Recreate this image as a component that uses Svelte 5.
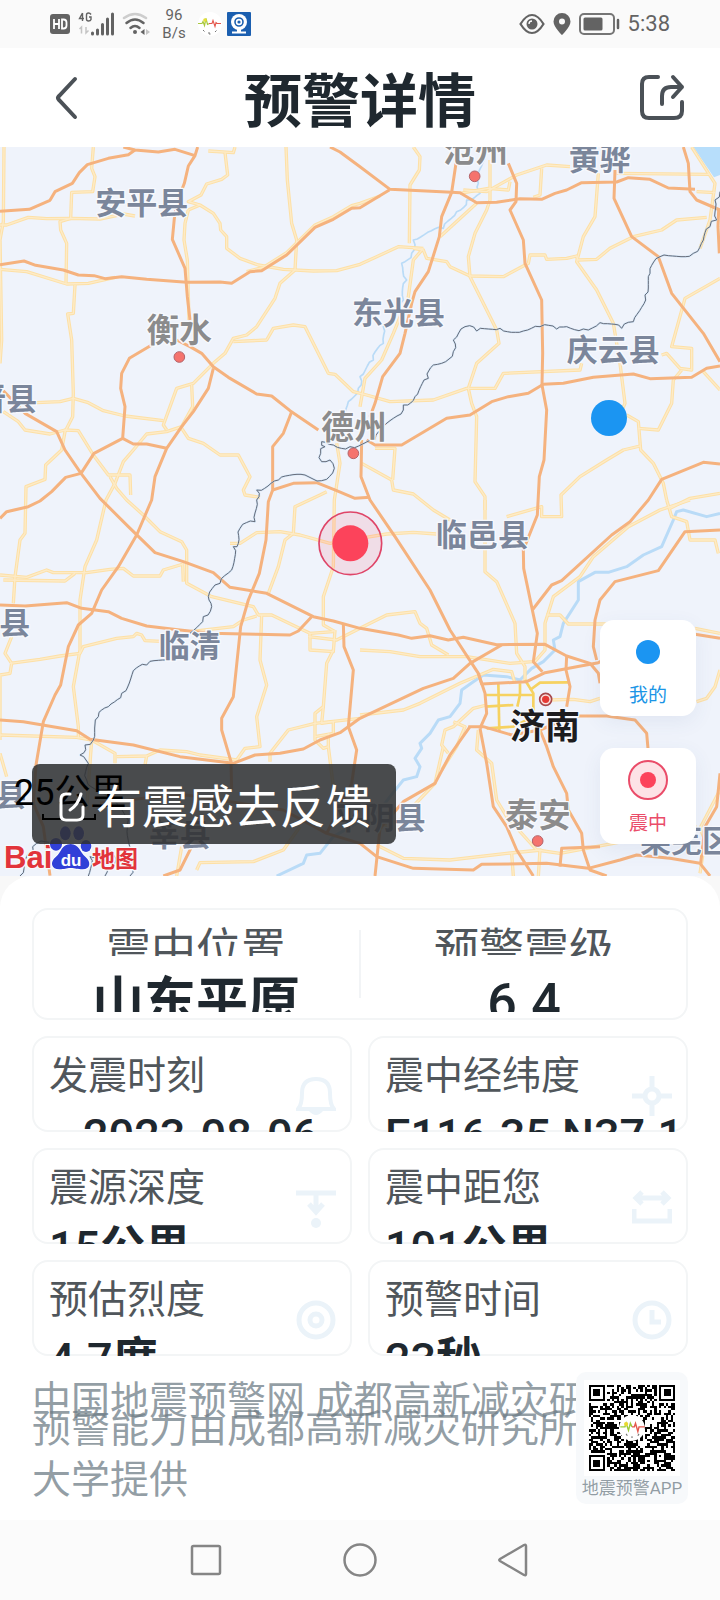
<script>
  const highways = [
    'M370,21 405,30 475,36 525,28 585,47',
    'M405,30 385,44 325,55 262,74 238,98 217,130 165,155 150,181 88,208 0,214',
    'M593,21 585,47 565,78 553,130 530,190 523,235 517,298 555,385 562,470 570,540',
    'M0,374 72,363 107,376 190,390 235,405 282,407 315,416 365,410 440,418 560,427 660,426 695,430 750,395 785,392 860,345 945,262 1000,238 1055,205 1080,203 1168,150',
    'M990,21 1020,36 1080,80 1170,148 1355,157 1380,158 1430,188 1490,187 1560,176 1625,178 1665,160 1700,150 1745,128 1850,126 1885,113 1950,118 2005,144 2085,148',
    'M1368,70 1355,157 1325,230 1318,290 1285,395 1245,455 1235,490 1215,580 1200,640 1148,710 1125,790 1110,830',
    'M1525,70 1550,130 1548,185 1530,210 1570,300 1575,370 1625,480 1628,640 1626,735 1640,810 1632,960 1618,1010 1612,1125 1570,1230 1571,1285 1597,1410 1612,1480 1605,1530 1600,1565 1627,1595',
    'M1845,90 1842,175 1895,290 1975,350 2015,460 2110,580 2160,665',
    'M2050,21 2065,70 2070,155 2090,180 2160,210',
    'M2156,210 2154,260 2158,340',
    'M1100,900 1125,915 1205,915 1340,835 1410,825 1475,785 1525,770 1585,760 1630,733 1690,730 1780,712 1900,702 1950,716 2075,712 2120,685 2160,678',
    'M1597,1410 1655,1335 1685,1322 1835,1185 1890,1145 1945,1080 1985,1018 2110,967 2160,972',
    'M530,600 570,620 605,640 640,680 685,712 770,762 815,768 870,812 955,870',
    'M455,615 388,655 365,700 362,745 375,800 368,895 282,940 243,1000 197,1012 155,1055 120,1083 85,1100 20,1115 0,1135',
    'M640,685 625,745 580,815 545,860 500,925 465,1010 455,1080 410,1185 355,1280 305,1350 275,1420 235,1455 205,1520 182,1635 165,1665 130,1745 108,1875 100,1990 130,2060 150,2207',
    'M368,895 400,912 440,912 500,925',
    'M10,752 75,820 170,875 195,930 243,1000 300,1075 385,1160 465,1238 550,1265 640,1298 690,1342 800,1360 940,1430 1000,1443 1080,1465 1195,1485 1235,1495 1290,1487 1345,1500 1390,1492 1490,1514 1635,1513 1700,1548 1770,1570 1795,1600 1800,1630',
    'M875,815 850,880 818,920 818,1050 805,1085 798,1200 778,1300 745,1380 722,1460 700,1670 665,1735 665,1770 693,1865 695,1950',
    'M818,1050 880,1030 950,1028 1010,1052 1065,1075 1110,1072',
    'M1085,900 1083,1010 1110,1080 1185,1190 1290,1350 1350,1470 1435,1600 1455,1660 1460,1720 1440,1765',
    'M0,1395 75,1398 200,1388 245,1405 325,1415 365,1435 440,1458 540,1470 630,1480 770,1483 870,1485 895,1473 935,1430',
    'M0,1740 70,1745 230,1772 270,1798 400,1815 540,1850 700,1870 765,1845 840,1840 910,1827 960,1800 1020,1778 1080,1735 1270,1645 1360,1615 1410,1570 1505,1515',
    'M1030,1450 1032,1520 1060,1590 1045,1760 1070,1830 1055,1930 980,2080',
    'M300,1990 430,1975 560,1965 720,1990 850,2010 980,2080 1080,2110 1130,2150 1240,2185 1420,2190 1445,2173 1640,2170 1765,2185 1860,2160 1910,2145 2010,2155 2100,2170 2130,2208',
    'M490,2208 540,2190 575,2120',
    'M1410,1760 1350,1845 1305,1930 1210,1985 1140,2065 1125,2208',
    'M1405,1760 1450,1760 1535,1785 1620,1770 1720,1728 1820,1728 1905,1740 1940,1780 1947,1860 1940,1960',
    'M1435,1600 1445,1632 1580,1625 1635,1598 1730,1580 1795,1568 1820,1555',
    'M1700,1548 1698,1590 1710,1640 1700,1700',
    'M1620,1770 1640,1820 1660,1880 1700,1960 1705,2010 1745,2080 1750,2130 1770,2190 1820,2208',
    'M1790,1560 1780,1520 1785,1440 1800,1380 1845,1325 1975,1292 1990,1270 2055,1175 2160,1170',
    'M2085,1483 2160,1495',
    'M1440,1765 1460,1870 1480,2000 1520,2060 1550,2130 1600,2208',
    'M1680,2180 1685,2125 1800,2120',
    'M2160,1900 2150,2000 2115,2060 2102,2170'
  ];

  const roads = [
    'M12,21 10,245 0,300 5,600 0,670',
    'M280,21 275,85 285,110 278,155 215,157 212,235',
    'M0,255 20,255 85,232 140,236 212,235 300,237 370,222 405,228',
    'M212,235 180,245 182,270 200,310 198,430',
    'M0,388 80,395 200,432 265,430 345,412',
    'M225,435 220,520 203,522 215,600 220,760 218,830 195,875 185,930 137,975 135,1018 78,1040 75,1180 60,1200 45,1310 40,1390',
    'M625,33 700,38 705,21',
    'M675,38 683,105 665,118 620,132 603,165 565,185 600,195 640,220 660,250 662,270 680,290 680,325 720,355 775,375 850,388 940,393 1010,392 1080,373 1130,350 1195,320 1270,325',
    'M600,195 565,210 555,250 552,300 562,360 567,540',
    'M858,21 862,120 875,250 890,300 885,390 840,430 825,475 770,560 740,585 700,595 675,640 640,670 580,730 530,745 490,855 500,870',
    'M740,395 790,382 860,338 945,255 1000,230 1055,197 1080,190 1140,168',
    'M700,605 800,600 820,565 880,555 915,560 985,700 1005,703 1060,755 1100,765 1170,785 1300,780 1400,745 1485,745 1510,700 1740,690 1745,670',
    'M575,735 578,800 545,860 500,875 440,882 400,930 370,965 345,1030 318,1080 290,1200 255,1280 240,1380 240,1530 220,1640 235,1760 235,1795',
    'M110,788 180,785 220,775 265,788 310,812 375,828 490,842',
    'M10,815 55,845 75,870 150,882 195,870 235,872 280,945 325,1005 390,1005 392,1065',
    'M330,1010 350,1045 380,1080 430,1125 480,1175 545,1205 560,1230 560,1330 635,1370 760,1400 775,1425 815,1425 930,1480 1000,1475',
    'M548,1270 550,1325',
    'M545,865 565,895 610,910 660,945 715,945 750,1010 730,1050 735,1065 780,1072',
    'M1010,910 1020,970 1003,1080 1000,1280 970,1370 970,1455 1005,1475',
    'M980,1055 960,1065 885,1100 880,1180 855,1200 835,1280 805,1360',
    'M690,1210 720,1210 770,1178 840,1175 900,1185 990,1210 1080,1195 1160,1182 1240,1177 1310,1182',
    'M0,1305 80,1312 140,1290 160,1298 260,1298 330,1288 370,1285 400,1308 480,1308 490,1290 550,1272',
    'M10,1320 195,1323 225,1300',
    'M30,1570 120,1558 180,1548 240,1540 250,1520 350,1495 400,1490 410,1480 425,1485 435,1502 500,1505',
    'M35,1490 15,1540 35,1570 30,1600 0,1605 0,1800',
    'M0,1785 230,1792 275,1800 345,1840 345,1870',
    'M275,1800 260,2010',
    'M350,1850 440,1848 480,1830 560,1835 600,1845 710,1860 735,1825 780,1820 770,1730 800,1635 780,1560 785,1425',
    'M440,1848 435,1875',
    'M570,1475 700,1460 730,1440 770,1428',
    'M930,1480 930,1530 1000,1535 1005,1470',
    'M925,1490 1010,1500 1080,1465 1160,1425 1245,1415 1260,1450 1280,1465 1295,1515 1345,1545',
    'M1000,1530 980,1570 970,1700 945,1720 945,1800 970,1825 985,1820 985,1780',
    'M945,1750 1080,1735',
    'M945,1750 865,1770 810,1840 810,1865',
    'M970,1700 965,1750 1000,1745 1000,1780 945,1790',
    'M985,1820 1000,1940',
    'M0,1840 20,1910',
    'M590,2190 600,2168 760,2165 850,2130 900,2060',
    'M530,2208 545,2120',
    'M1080,1530 1170,1535 1260,1550 1400,1550 1530,1570 1600,1565',
    'M1455,1080 1455,1295 1490,1325 1545,1450 1550,1540 1575,1580 1575,1625',
    'M1085,970 1175,1020 1180,1050 1240,1062 1300,1110 1350,1140',
    'M1125,925 1185,925 1178,1020',
    'M2070,1080 1980,1110 1885,1160 1780,1250 1740,1310 1660,1370 1635,1450 1635,1530 1600,1570',
    'M1640,1425 1680,1425 1705,1452 1820,1452',
    'M1520,1130 1625,1100 1625,1130 1685,1130 1683,1065 1740,1010 1820,960 1870,930 1920,918',
    'M2000,1080 2015,1130 2060,1145 2070,1200 2145,1200 2155,1240',
    'M1080,1725 1210,1710 1260,1690 1380,1630 1480,1588 1535,1595 1545,1630',
    'M1460,1695 1420,1705 1360,1760 1335,1770 1325,1815 1345,1840',
    'M1360,1745 1395,1760 1370,1820 1325,1890',
    'M1640,1680 1720,1678 1770,1685 1800,1675',
    'M2090,1685 2120,1675 2145,1640 2160,1590',
    'M2085,1465 2160,1480',
    'M1140,2065 1200,2040 1305,1930 1330,1820',
    'M1435,1770 1430,1830 1475,1870 1490,1980 1520,2030 1610,2130 1680,2140 1840,2110 2090,2060',
    'M1130,2115 1210,2155 1350,2160 1520,2140 1625,2130',
    'M1535,2140 1540,2208',
    'M1620,2130 1615,2208',
    'M2160,1950 2100,2065 2115,2100 2100,2200',
    'M1240,21 1260,50 1258,90 1230,135 1228,310',
    'M1270,325 1240,360 1225,470 1180,580 1145,660 1095,715 1080,800',
    'M1240,325 1270,330 1280,355 1340,365 1350,380 1410,408 1510,410 1585,370 1590,345 1635,345 1640,358 1700,355 1730,348 1733,360 1790,358 1830,325 1900,290 1985,270 2030,240 2120,232',
    'M1470,60 1470,180 1460,210 1425,280 1405,350 1410,410 1450,490 1490,570 1497,610 1430,670 1405,745 1415,790 1430,830 1425,1025 1455,1070 1455,1110',
    'M1390,150 1460,155 1550,105 1640,75 1710,80',
    'M1625,85 1620,165 1600,172',
    'M1380,160 1465,145 1525,150 1530,125',
    'M1850,100 2130,103',
    'M1795,100 1785,230 1750,290 1730,365 1790,450 1840,550 1860,670 1875,790 1860,825',
    'M2075,21 2145,130 2130,240 2100,325',
    'M2090,155 2145,158',
    'M2160,415 2055,475 2015,620 2075,625 2075,690 2040,685 2000,640 1985,645',
    'M2045,690 2020,720 2015,790 1975,870 1915,865',
    'M2110,695 2160,750',
    'M1880,825 1915,845 1922,930 1960,970 1990,1030 2000,1080',
    'M2010,1105 2070,1075 2160,1060',
    'M1430,190 1320,290'
  ];

  const streets = [
    'M1455,1665 1600,1665',
    'M1495,1630 1498,1775',
    'M1560,1630 1560,1665 1552,1700',
    'M1575,1620 1600,1660 1600,1720',
    'M1590,1650 1620,1628 1705,1627',
    'M1455,1700 1540,1695',
    'M1460,1765 1540,1760 1600,1730'
  ];

  const river =
    'M2160,1120 2120,1130 2050,1110 2030,1115 2020,1140 1985,1220 1930,1245 1880,1280 1825,1297 1785,1297 1735,1325 1735,1380 1690,1450 1680,1490 1660,1500 1665,1530 1630,1565 1595,1585 1560,1620 1520,1610 1450,1605 1420,1625 1385,1650 1380,1690 1350,1730 1315,1740 1290,1780 1260,1810 1265,1825 1245,1855 1260,1880 1250,1910 1210,1920 1170,1970 1140,2010 1000,2090 960,2140 920,2145 910,2170 830,2208';

  const canal = [
    [1455, 55], [1435, 130], [1440, 160], [1400, 180], [1370, 215], [1330, 265], [1240, 300], [1235, 340],
    [1205, 370], [1220, 420], [1210, 480], [1150, 560], [1150, 610], [1120, 660], [1080, 710], [1075, 745],
    [1045, 785], [1040, 830]
  ];

  const borders = [
    [
      [570, 1480], [610, 1430], [635, 1400], [625, 1370], [660, 1330], [695, 1290], [700, 1220], [715, 1210],
      [720, 1165], [765, 1145], [770, 1080], [770, 1050], [835, 1020], [915, 1005], [965, 1022], [1003, 985],
      [990, 960], [965, 965], [962, 940], [975, 920], [965, 905], [1000, 915], [1050, 920], [1125, 900], [1150, 870],
      [1180, 835], [1210, 810], [1210, 795], [1245, 770], [1285, 715], [1300, 675], [1325, 670], [1360, 635],
      [1360, 600], [1395, 560], [1430, 573], [1500, 565], [1570, 573], [1620, 560], [1670, 567], [1700, 560],
      [1750, 567], [1800, 548], [1865, 565], [1900, 545], [1935, 465], [1950, 400], [1980, 350], [2080, 340],
      [2110, 300], [2130, 260], [2150, 240], [2145, 180], [2160, 155]
    ],
    [
      [500, 1560], [440, 1575], [400, 1592], [365, 1660], [325, 1700], [295, 1730], [280, 1800], [255, 1815],
      [240, 1845], [265, 1870], [260, 1920], [330, 1980], [385, 2040], [395, 2130], [390, 2208]
    ],
    [[160, 2110], [110, 2110], [100, 2135], [80, 2150], [60, 2208]],
    [[265, 2208], [270, 2150], [330, 2130], [345, 2170], [320, 2180], [315, 2208]]
  ];

  // Breaks a polyline into short irregular steps, as surveyed lines look.
  function ragged(points, size) {
    let d = `M${points[0]}`;
    let n = 0;
    for (let i = 1; i < points.length; i++) {
      const [x0, y0] = points[i - 1];
      const [x1, y1] = points[i];
      const len = Math.hypot(x1 - x0, y1 - y0);
      const steps = Math.max(1, Math.round(len / 12));
      for (let s = 1; s <= steps; s++) {
        n++;
        const k = s === steps ? 0 : Math.sin(n * 12.9) * size;
        const x = x0 + ((x1 - x0) * s) / steps - ((y1 - y0) / len) * k;
        const y = y0 + ((y1 - y0) * s) / steps + ((x1 - x0) / len) * k;
        d += ` ${Math.round(x)},${Math.round(y)}`;
      }
    }
    return d;
  }

  const places = [
    { x: 286, y: 223, name: '安平县' },
    { x: 1706, y: 91, name: '黄骅' },
    { x: 1056, y: 553, name: '东光县' },
    { x: 1700, y: 662, name: '庆云县' },
    { x: -74, y: 810, name: '晋县' },
    { x: 1308, y: 1218, name: '临邑县' },
    { x: -2, y: 1481, name: '县' },
    { x: 476, y: 1552, name: '临清' },
    { x: -14, y: 1997, name: '县' },
    { x: 446, y: 2117, name: '莘县' },
    { x: 998, y: 2067, name: '平阴县' },
    { x: 1920, y: 2137, name: '莱芜区' }
  ];
  const cities = [
    { x: 1328, y: 66, name: '沧州', px: 1424, py: 109 },
    { x: 440, y: 607, name: '衡水', px: 538, py: 651 },
    { x: 964, y: 897, name: '德州', px: 1060, py: 940 },
    { x: 1516, y: 2061, name: '泰安', px: 1613, py: 2103 }
  ];

  const facts = [
    { label: '发震时刻', value: '2023-08-06', unit: '', icon: 'bell', inset: true },
    { label: '震中经纬度', value: 'E116.35 N37.1', unit: '', icon: 'cross' },
    { label: '震源深度', value: '15', unit: '公里', icon: 'depth' },
    { label: '震中距您', value: '101', unit: '公里', icon: 'span' },
    { label: '预估烈度', value: '4.7', unit: '度', icon: 'target' },
    { label: '预警时间', value: '23', unit: '秒', icon: 'clock' }
  ];

  const N = 37;
  function isDark(x, y) {
    for (const [fx, fy] of [[0, 0], [N - 7, 0], [0, N - 7]]) {
      const dx = x - fx;
      const dy = y - fy;
      if (dx >= -1 && dx <= 7 && dy >= -1 && dy <= 7) {
        const r = Math.max(Math.abs(dx - 3), Math.abs(dy - 3));
        return r === 3 || r < 2;
      }
    }
    const a = Math.max(Math.abs(x - 30), Math.abs(y - 30));
    if (a <= 2) return a !== 1;
    if (x === 6 || y === 6) return (x + y) % 2 === 0;
    const h = Math.sin(x * 127.1 + y * 311.7) * 43758.5453;
    return h - Math.floor(h) < 0.52;
  }
  let qr = '';
  for (let y = 0; y < N; y++) for (let x = 0; x < N; x++) if (isDark(x, y)) qr += `M${x},${y}h1v1h-1z`;
</script>

<div class="screen">
  <div class="status">
    <div class="group">
      <svg width="20" height="22" viewBox="0 0 20 22"><rect y="1" width="20" height="20" rx="3" fill="#636363" /><path d="M4 6v10M9 6v10M4 11h5M12 6.500v9h1.500q3 0 3-3v-3q0-3-3-3z" fill="none" stroke="#fff" stroke-width="1.800" /></svg>
      <svg width="36" height="26" viewBox="0 0 36 26">
        <path d="M4.500 2L1.500 7.500h4.500M4.500 2v8M13 3.500q-1-1.500-2.500-1.500-2 0-2 2v4q0 2 2 2t2.500-1.500v-2.500h-2" fill="none" stroke="#636363" stroke-width="1.400" />
        <path d="M3.500 16.500v6M1.500 18l2-2v4M8 16v6l2.500-2.500" fill="none" stroke="#c4c4c4" stroke-width="1.500" />
        <path d="M14.500 22v1M19.500 19v4M24.500 13.500v9.500M29.500 8v15M34.500 3v20" stroke="#636363" stroke-width="3" stroke-linecap="round" />
      </svg>
      <svg width="28" height="26" viewBox="0 0 28 26" fill="none" stroke-width="2.500" stroke-linecap="round">
        <path d="M2 7q11-8 22 0" stroke="#cdcdcd" /><path d="M4.500 12q8.500-7 17 0M8.500 17q4.500-4 9 0" stroke="#636363" />
        <circle cx="13" cy="21" r="2" fill="#636363" stroke="none" /><path d="M22.500 18v6l-4-3z" fill="#636363" stroke="none" /><path d="M24 18l4 3-4 3z" fill="#c4c4c4" stroke="none" />
      </svg>
      <div class="rate"><span>96</span><span>B/s</span></div>
      <div class="apps">
        <svg width="24" height="24" viewBox="0 0 24 24"><circle cx="12" cy="12" r="12" fill="#fff" /><path d="M0 11.500h4l1-2 1.500 4 1.500-7 1.500 6 2-1" fill="none" stroke="#a9c93f" stroke-width="1.200" /><circle cx="7" cy="8" r="1.800" fill="#e6e03a" /><path d="M11 11.500h3l1-3 2 6 1-4 1 1h4" fill="none" stroke="#e4584e" stroke-width="1.100" /><path d="M5 18l1.500 1.500M11 20v2h1.500M17 20l1.500-1.500" fill="none" stroke="#777" stroke-width="1" /></svg>
        <svg width="24" height="24" viewBox="0 0 24 24"><rect width="24" height="24" rx="1" fill="#1b5fb0" /><circle cx="12" cy="10" r="8" fill="#fff" /><circle cx="12" cy="10" r="4" fill="none" stroke="#1b5fb0" stroke-width="1.600" /><circle cx="12" cy="10" r="1.600" fill="#1b5fb0" /><path d="M10 17h4v2.500h5v2H5v-2h5z" fill="#fff" /></svg>
      </div>
    </div>
    <div class="group right">
      <svg width="26" height="22" viewBox="0 0 26 22"><path d="M1.500 11Q7 2 13 2t11.500 9Q19 20 13 20T1.500 11z" fill="none" stroke="#636363" stroke-width="2.200" /><circle cx="13" cy="11" r="5.500" fill="#636363" /><path d="M10 11q0-3 3-3" stroke="#fff" stroke-width="1.300" fill="none" /></svg>
      <svg width="18" height="22" viewBox="0 0 18 22"><path fill-rule="evenodd" d="M9 0a8.500 8.500 0 0 1 8.500 8.500C17.500 14 9 22 9 22S.500 14 .500 8.500A8.500 8.500 0 0 1 9 0zm0 5.500a3 3 0 1 0 0 6 3 3 0 0 0 0-6z" fill="#636363" /></svg>
      <svg width="41" height="22" viewBox="0 0 41 22"><rect x="1" y="1" width="34" height="20" rx="4" fill="none" stroke="#757575" stroke-width="2" /><rect x="4.500" y="4.500" width="19" height="13" rx="1.500" fill="#636363" /><path d="M39 7v8" stroke="#636363" stroke-width="2.500" stroke-linecap="round" /></svg>
      <span class="time">5:38</span>
    </div>
  </div>

  <header>
    <button class="bare" aria-label="返回"><svg width="48" height="48" viewBox="0 0 48 48"><path d="M41 5L25 22q-2 2 0 4l16 17" fill="none" stroke="#4b5157" stroke-width="4" stroke-linecap="round" /></svg></button>
    <h1>预警详情</h1>
    <button class="bare" aria-label="分享"><svg width="48" height="48" viewBox="0 0 48 48"><g fill="none" stroke="#4b5157" stroke-width="4" stroke-linecap="round" stroke-linejoin="round"><path d="M20 3h-9q-7 0-7 7v27q0 7 7 7h25q8 0 8-7v-9" /><path d="M24 30v-8q0-9 9-9h11M35 3l9 10-9 10" /></g></svg></button>
  </header>

  <section class="map">
    <svg class="canvas" viewBox="0 21 2160 2187" preserveAspectRatio="xMidYMid slice">
      <path d="M2080,21H2160V105L2142,112Z" fill="#b7defb" />
      <g fill="none" stroke-linejoin="round">
        <path d={river} stroke="#b9dbf7" stroke-width="9" />
        <path d={ragged(canal, 8)} stroke="#b9dbf7" stroke-width="5" />
        <g stroke="#fde0a6" stroke-width="10">{#each roads as d}<path {d} />{/each}</g>
        <g stroke="#fdebc8" stroke-width="4">{#each roads as d}<path {d} />{/each}</g>
        <g stroke="#f6d261" stroke-width="8">{#each streets as d}<path {d} />{/each}</g>
        <g stroke="#f5b27e" stroke-width="9">{#each highways as d}<path {d} />{/each}</g>
        {#each borders as line}
          <path d={ragged(line, 8)} stroke="#b9dbf7" stroke-width="6" stroke-opacity="0.500" />
          <path d={ragged(line, 8)} stroke="#666c7a" stroke-width="3" />
        {/each}
      </g>
      <g class="place">{#each places as p}<text x={p.x} y={p.y}>{p.name}</text>{/each}</g>
      <g class="city">
        {#each cities as c}
          <text x={c.x} y={c.y}>{c.name}</text>
          <circle cx={c.px} cy={c.py} r="16" />
        {/each}
      </g>
      <circle cx="1637" cy="1678" r="18" fill="#fbe3e0" stroke="#a8484a" stroke-width="5" />
      <circle cx="1637" cy="1678" r="11" fill="#e53a35" />
      <text class="capital" x="1530" y="1797">济南</text>

      <circle cx="1827" cy="834" r="54" fill="#1b95f2" />
      <circle cx="1051" cy="1210" r="94" fill="#f9455c" fill-opacity="0.120" stroke="#df4568" stroke-width="5" />
      <circle cx="1051" cy="1210" r="54" fill="#fc435b" />

      <g class="brand">
        <text class="latin" x="12" y="2185">Bai</text>
        <text class="han" x="276" y="2180">地图</text>
        <g fill="#3140d8" stroke="#fff" stroke-width="5" paint-order="stroke">
          <ellipse cx="168" cy="2113" rx="18" ry="19" /><ellipse cx="196" cy="2080" rx="16" ry="21" />
          <ellipse cx="236" cy="2080" rx="16" ry="21" /><ellipse cx="258" cy="2118" rx="16" ry="18" />
          <path d="M212,2112c-28,0-28,26-44,38-20,16-14,38,10,38 16,0 20-4 34-4s20,4 36,4c24,0 26-24 8-38-16-12-18-38-44-38z" />
        </g>
        <text class="du" x="182" y="2178">du</text>
      </g>
    </svg>

    <button class="feedback">
      <svg width="28" height="32" viewBox="0 0 28 32" fill="none" stroke="#fff" stroke-width="3" stroke-linecap="round"><path d="M12 3H8Q3 3 3 8v16q0 5 5 5h11q6 0 6-5v-8M12 19q8-5 11-16" /></svg>
      <span>有震感去反馈</span>
    </button>
    <div class="scale"><span>25公里</span></div>

    <div class="locate">
      <button class="mine">
        <svg width="40" height="40" viewBox="0 0 40 40"><circle cx="20" cy="20" r="12" fill="#1b95f2" /></svg>
        <span>我的</span>
      </button>
      <button class="epicentre">
        <svg width="40" height="40" viewBox="0 0 40 40"><circle cx="20" cy="20" r="19" fill="#fde2e6" stroke="#ea4c69" stroke-width="2" /><circle cx="20" cy="20" r="8" fill="#fc435b" /></svg>
        <span>震中</span>
      </button>
    </div>
  </section>

  <main>
    <dl class="summary">
      <div><dt>震中位置</dt><dd><b>山东平原</b></dd></div>
      <div><dt>预警震级</dt><dd>6.4</dd></div>
    </dl>

    <dl class="facts">
      {#each facts as f}
        <div class="fact">
          <svg width="40" height="40" viewBox="0 0 40 40" fill="none" stroke="#ebf3f9" stroke-width="5">
            {#if f.icon === 'bell'}
              <path d="M2 33Q6 29 6 17 6 3 20 3t14 14q0 12 4 16z" stroke-width="4" /><path d="M13 35h14q-7 8-14 0z" fill="#ebf3f9" stroke="none" />
            {:else if f.icon === 'cross'}
              <circle cx="20" cy="20" r="7" /><path d="M20 0v13M20 27v13M0 20h13M27 20h13" />
            {:else if f.icon === 'depth'}
              <path d="M0 5h40M20 5v19M13 16l7 8 7-8" /><circle cx="20" cy="35" r="5" fill="#ebf3f9" stroke="none" />
            {:else if f.icon === 'span'}
              <path d="M4 10h32M10 4l-6 6 6 6M30 4l6 6-6 6M2 21v12h36V21" />
            {:else if f.icon === 'target'}
              <circle cx="20" cy="20" r="17" /><circle cx="20" cy="20" r="6" />
            {:else}
              <circle cx="20" cy="20" r="17" /><path d="M20 10v12h9" />
            {/if}
          </svg>
          <dt>{f.label}</dt>
          <dd class:inset={f.inset}>{f.value}<b>{f.unit}</b></dd>
        </div>
      {/each}
    </dl>

    <footer>
      <div class="credit">
        <p class="source">中国地震预警网 成都高新减灾研究所</p>
        <p>预警能力由成都高新减灾研究所<br />大学提供</p>
      </div>
      <figure>
        <svg width="96" height="96" viewBox="-2 -2 41 41">
          <rect x="-2" y="-2" width="41" height="41" fill="#fff" />
          <path d={qr} fill="#000" shape-rendering="crispEdges" />
          <circle cx="18.500" cy="18.500" r="5.500" fill="#fff" />
          <path d="M13.500 18h2l.500-1.500 1 3 .800-3 .700 1.500" fill="none" stroke="#9ccb3c" stroke-width=".600" /><path d="M18.500 18h1l.500-1.500 1 3.500.500-2h2.500" fill="none" stroke="#e4584e" stroke-width=".600" />
          <circle cx="16" cy="16.800" r=".900" fill="#e9d92e" /><path d="M16 21l.500.800M18.500 22v.800M21 21.800l.500-.800" stroke="#777" stroke-width=".500" />
        </svg>
        <figcaption>地震预警APP</figcaption>
      </figure>
    </footer>
  </main>

  <nav>
    <button class="bare" aria-label="最近任务"><svg width="34" height="34" viewBox="0 0 34 34"><rect x="3" y="3" width="28" height="28" rx="1.500" /></svg></button>
    <button class="bare" aria-label="主页"><svg width="34" height="34" viewBox="0 0 34 34"><circle cx="17" cy="17" r="15.500" /></svg></button>
    <button class="bare" aria-label="后退"><svg width="34" height="34" viewBox="0 0 34 34"><path d="M29 3v28q0 2-2 1L3 18q-1.500-1 0-2L27 2q2-1 2 1z" /></svg></button>
  </nav>
</div>

<style>
  :global(body) {
    margin: 0;
    background: #fff;
  }
  .screen {
    display: flex;
    flex-direction: column;
    min-height: 100vh;
    background: #f8f8f8;
    color: #1f282f;
    font-family: Roboto, 'Noto Sans CJK SC', sans-serif;
  }
  svg {
    display: block;
    flex: none;
  }
  button {
    font: inherit;
    border: 0;
    padding: 0;
    cursor: pointer;
  }
  .bare {
    background: none;
  }
  dl, dd, p, figure, h1 {
    margin: 0;
  }
  b {
    font-weight: 700;
  }

  .status {
    display: flex;
    justify-content: space-between;
    align-items: center;
    height: 48px;
    padding: 0 50px;
    background: #fafafa;
    color: #636363;
  }
  .group {
    display: flex;
    align-items: center;
    gap: 8px;
  }
  .apps {
    display: flex;
    gap: 5px;
  }
  .rate {
    display: flex;
    flex-direction: column;
    align-items: center;
    width: 32px;
    font-size: 15px;
    line-height: 18px;
  }
  .time {
    font-size: 22px;
    line-height: 24px;
  }

  header {
    display: flex;
    align-items: center;
    justify-content: space-between;
    height: 99px;
    padding: 0 34px;
    background: #fff;
  }
  h1 {
    padding-top: 8px;
    font-size: 58px;
    line-height: 80px;
    font-weight: 700;
  }

  .map {
    position: relative;
    aspect-ratio: 720 / 729;
    background: #eff3fb;
    overflow: hidden;
  }
  .canvas {
    width: 100%;
    height: 100%;
  }
  .canvas text {
    stroke: #f7f9fd;
    stroke-width: 8px;
    paint-order: stroke;
    stroke-linejoin: round;
    font-weight: 700;
  }
  .place text {
    font-size: 93px;
    fill: #7b869b;
  }
  .city text {
    font-size: 98px;
    fill: #8b8b8c;
  }
  .city circle {
    fill: #f5736d;
    stroke: #b3646a;
    stroke-width: 3px;
  }
  .canvas .capital {
    font-size: 105px;
    fill: #1d1d1f;
  }
  .brand .latin {
    font: 700 93px 'Liberation Sans', sans-serif;
    fill: #e2343b;
  }
  .brand .han {
    font-size: 69px;
    fill: #e2343b;
  }
  .brand .du {
    font: 700 51px 'Liberation Sans', sans-serif;
    fill: #fff;
    stroke: none;
  }

  .feedback {
    position: absolute;
    left: 32px;
    bottom: 32px;
    display: flex;
    align-items: center;
    gap: 10px;
    height: 80px;
    padding: 6px 24px 0 26px;
    border-radius: 8px;
    background: rgba(48, 49, 51, 0.87);
    color: #fff;
    font-size: 46px;
    line-height: 64px;
    white-space: nowrap;
  }
  .feedback > * {
    position: relative;
    z-index: 2;
  }
  .scale {
    position: absolute;
    z-index: 1;
    left: 14px;
    bottom: 56px;
    font-size: 36px;
    line-height: 42px;
    color: #000;
    pointer-events: none;
  }
  .scale::after {
    content: '';
    display: block;
    width: 50px;
    height: 4px;
    margin-left: 28px;
    border: solid #000;
    border-width: 0 2px 2px;
  }
  .locate {
    position: absolute;
    right: 24px;
    bottom: 32px;
    display: flex;
    flex-direction: column;
    gap: 32px;
  }
  .locate button {
    display: flex;
    flex-direction: column;
    align-items: center;
    justify-content: space-between;
    width: 96px;
    height: 96px;
    padding: 12px 0 8px;
    border-radius: 14px;
    background: #fff;
    box-shadow: 0 6px 20px rgba(60, 90, 140, 0.08);
    font-size: 19px;
    line-height: 24px;
  }
  .mine {
    color: #1b95e6;
  }
  .epicentre {
    color: #ea4c69;
  }

  main {
    flex: 1;
    padding: 32px 32px 12px;
    border-radius: 32px 32px 0 0;
    background: #fff;
  }
  .summary {
    display: grid;
    grid-template-columns: 1fr 1fr;
    height: 112px;
    box-sizing: border-box;
    padding: 16px 0 8px;
    border-radius: 16px;
    box-shadow: inset 0 0 0 2px #f3f5f6;
    text-align: center;
    background: linear-gradient(#f2f4f6, #f2f4f6) center / 2px 68px no-repeat;
  }
  .summary dt {
    height: 32px;
    overflow: hidden;
    font-size: 45px;
    line-height: 54px;
    color: #50565b;
  }
  .summary dd {
    height: 48px;
    margin-top: 8px;
    overflow: hidden;
    font-size: 52px;
    line-height: 78px;
    font-weight: 500;
  }
  .facts {
    display: grid;
    grid-template-columns: 1fr 1fr;
    gap: 16px;
    margin-top: 16px;
  }
  .fact {
    position: relative;
    height: 96px;
    box-sizing: border-box;
    padding: 15px 5px 0 17px;
    border-radius: 16px;
    box-shadow: inset 0 0 0 2px #f3f5f6;
    overflow: hidden;
    white-space: nowrap;
  }
  .fact svg {
    position: absolute;
    right: 16px;
    top: 40px;
  }
  .fact dt {
    position: relative;
    font-size: 39px;
    line-height: 50px;
    color: #50565b;
  }
  .fact dd {
    position: relative;
    font-size: 45px;
    line-height: 70px;
    font-weight: 500;
    overflow: hidden;
  }
  .inset {
    text-indent: 34px;
  }

  footer {
    display: grid;
    grid-template-columns: minmax(0, 1fr) 112px;
    margin-top: 16px;
    color: rgba(112, 126, 136, 0.75);
  }
  .credit {
    overflow: hidden;
    font-size: 39px;
    line-height: 51px;
    white-space: nowrap;
  }
  .source {
    height: 28px;
    padding-top: 4px;
  }
  figure {
    display: flex;
    flex-direction: column;
    align-items: center;
    height: 132px;
    box-sizing: border-box;
    padding-top: 8px;
    border-radius: 10px;
    background: #f7f9fb;
  }
  figcaption {
    font-size: 17px;
    line-height: 24px;
    white-space: nowrap;
  }

  nav {
    display: flex;
    align-items: center;
    justify-content: center;
    gap: 120px;
    height: 80px;
    background: #fbfbfb;
  }
  nav svg {
    fill: none;
    stroke: #858585;
    stroke-width: 2.5px;
  }
</style>
